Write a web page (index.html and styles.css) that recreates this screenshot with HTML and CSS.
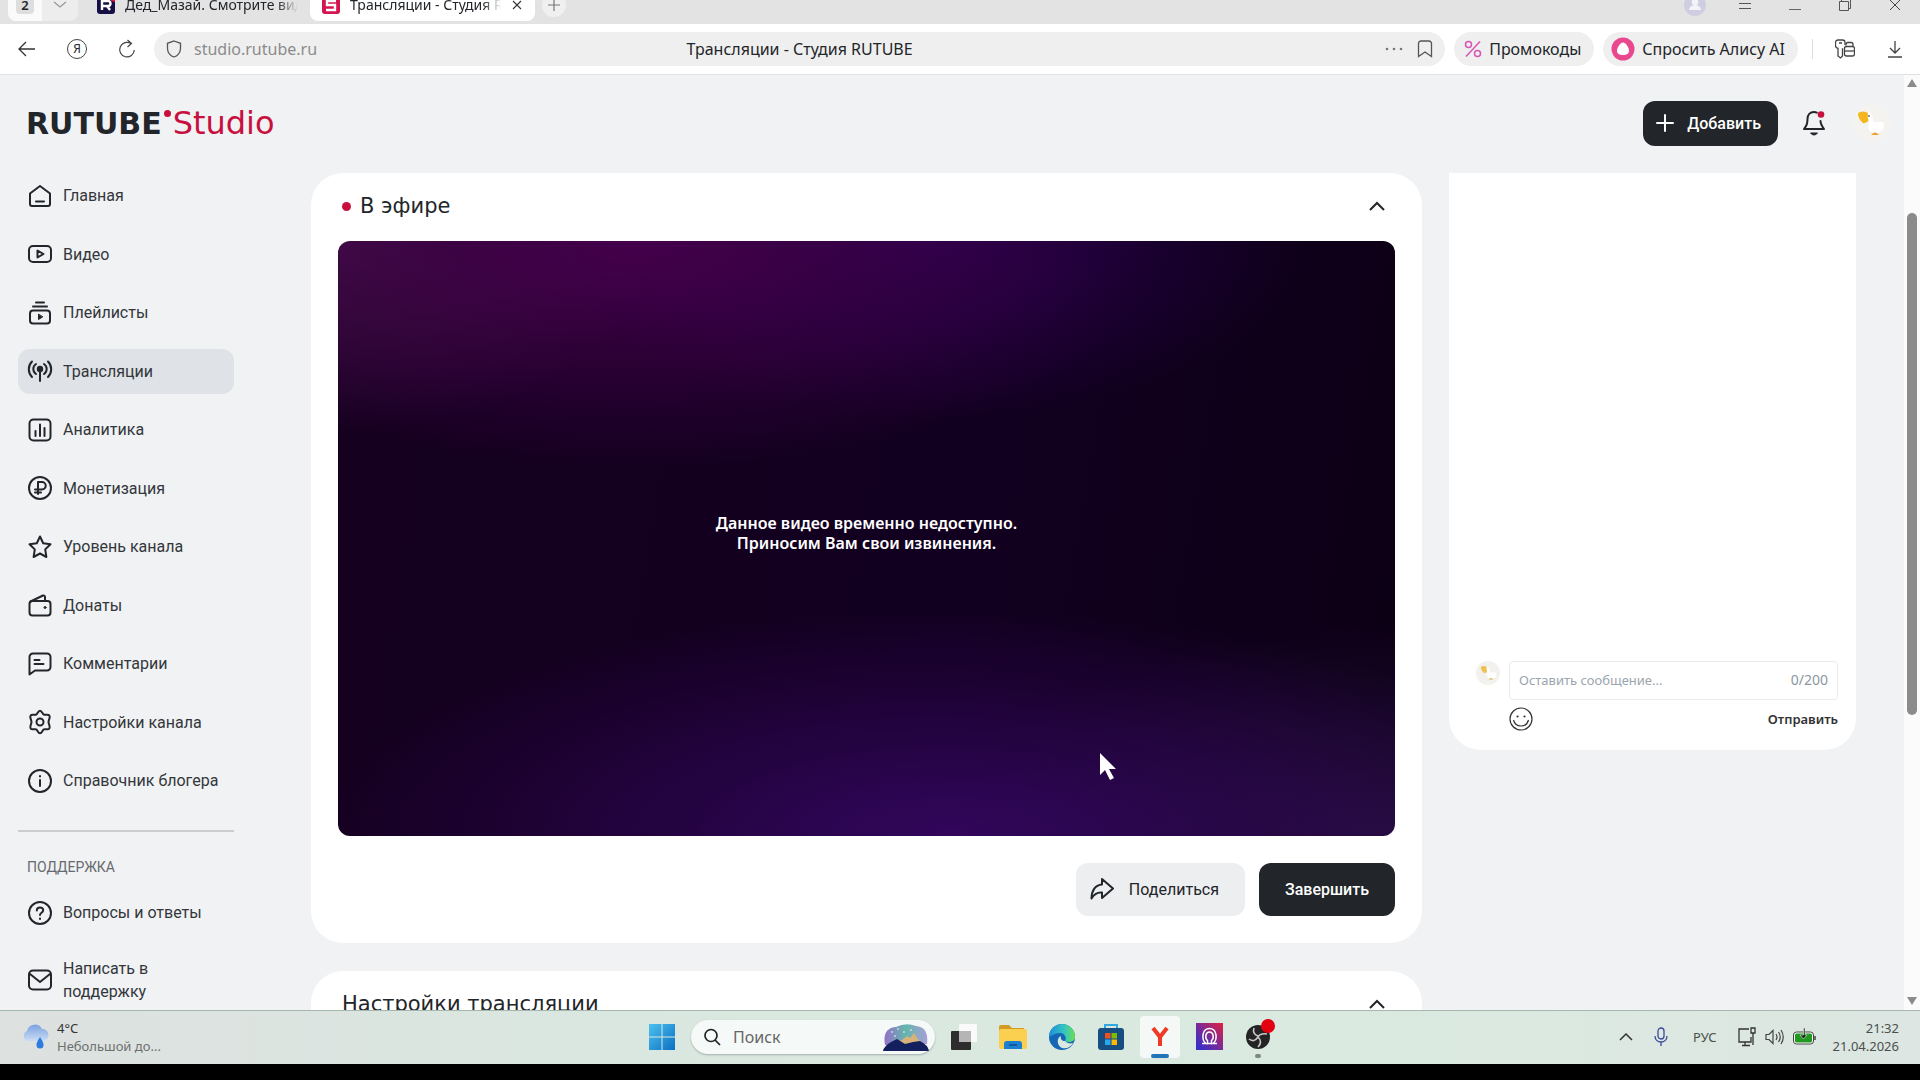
FILE: index.html
```html
<!DOCTYPE html>
<html lang="ru">
<head>
    <meta charset="UTF-8">
    <meta name="viewport" content="width=device-width, initial-scale=1.0">
    <title>Трансляции - Студия RUTUBE</title>
    <link rel="stylesheet" href="styles.css">
</head>
<body>
    <!-- Browser tabs -->
    <div class="tab-strip">
        <div class="tab-group">
            <button class="tab-count" type="button"><span>2</span></button>
            <button class="tab-list" type="button" aria-label="Список вкладок">
                <svg width="14" height="8" viewBox="0 0 14 8"><path d="M1 1l6 5 6-5" fill="none" stroke="#999" stroke-width="1.3"/></svg>
            </button>
        </div>
        <div class="tab">
            <svg width="18" height="18" viewBox="0 0 18 18"><rect width="18" height="18" rx="3" fill="#150f45"/><path d="M13 0h2a3 3 0 0 1 3 3v3a5 5 0 0 1-5-6z" fill="#e5173f"/><path d="M5 14V5h6a2 2 0 0 1 0 5H5m5 0l3 4" fill="none" stroke="#fff" stroke-width="2.4"/></svg>
            <span class="tab-title">Дед_Мазай. Смотрите видео</span>
        </div>
        <div class="tab active">
            <svg width="18" height="18" viewBox="0 0 18 18"><rect width="18" height="18" rx="3" fill="#d4154f"/><path d="M14 5H5v4h8v5H4" fill="none" stroke="#fff" stroke-width="2.4"/></svg>
            <span class="tab-title">Трансляции - Студия RUTUBE</span>
            <button class="tab-close" type="button" aria-label="Закрыть вкладку">
                <svg width="10" height="10" viewBox="0 0 10 10"><path d="M1 1l8 8M9 1L1 9" stroke="#333" stroke-width="1.1"/></svg>
            </button>
        </div>
        <button class="tab-new" type="button" aria-label="Новая вкладка">
            <svg width="14" height="14" viewBox="0 0 14 14"><path d="M7 1v12M1 7h12" stroke="#777" stroke-width="1.2"/></svg>
        </button>
        <div class="window-controls">
            <button type="button" aria-label="Профиль"><svg width="22" height="22" viewBox="0 0 22 22"><circle cx="11" cy="11" r="11" fill="#cfcde0"/><circle cx="11" cy="8" r="3.2" fill="#f4f3fa"/><path d="M5 16a6 5 0 0 1 12 0z" fill="#f4f3fa"/></svg></button>
            <button type="button" aria-label="Меню"><svg width="12" height="12" viewBox="0 0 12 12"><path d="M0 4.500h12M0 9.500h12" stroke="#555"/></svg></button>
            <button type="button" aria-label="Свернуть"><svg width="12" height="12" viewBox="0 0 12 12"><path d="M0 10.500h12" stroke="#666"/></svg></button>
            <button type="button" aria-label="Окно"><svg width="12" height="12" viewBox="0 0 12 12"><path d="M.5 2.500h9v9h-9zM2.500 2.500v-2h9v9h-2" fill="none" stroke="#555"/></svg></button>
            <button type="button" aria-label="Закрыть"><svg width="12" height="12" viewBox="0 0 12 12"><path d="M1 1l10 10M11 1L1 11" stroke="#444"/></svg></button>
        </div>
    </div>

    <!-- Address bar -->
    <div class="toolbar">
        <button class="tool-btn" type="button" aria-label="Назад"><svg width="18" height="18" viewBox="0 0 18 18"><path d="M8 2L1 9l7 7M1 9h16" fill="none" stroke="#333" stroke-width="1.3"/></svg></button>
        <button class="tool-btn" type="button" aria-label="Яндекс"><span class="ya-badge">Я</span></button>
        <button class="tool-btn" type="button" aria-label="Обновить"><svg width="18" height="20" viewBox="0 0 18 20"><path d="M13 4.500A7.300 7.300 0 1 0 16.300 11M9.500 1l4 3.500-4 3.500" fill="none" stroke="#444" stroke-width="1.200"/></svg></button>
        <div class="address">
            <div class="address-left">
                <svg width="16" height="18" viewBox="0 0 16 18"><path d="M8 1l6.500 2.300v5.200C14.500 13 11 16 8 17c-3-1-6.500-4-6.500-8.500V3.300z" fill="none" stroke="#555" stroke-width="1.3"/></svg>
                <span class="address-url">studio.rutube.ru</span>
            </div>
            <span class="address-title">Трансляции - Студия RUTUBE</span>
            <div class="address-right">
                <svg width="18" height="4" viewBox="0 0 18 4"><g fill="#777"><circle cx="2" cy="2" r="1.300"/><circle cx="9" cy="2" r="1.300"/><circle cx="16" cy="2" r="1.300"/></g></svg>
                <svg width="16" height="18" viewBox="0 0 16 18"><path d="M1.500 16.500V3.500a2.500 2.500 0 0 1 2.500-2.500h8a2.500 2.500 0 0 1 2.500 2.500v13L8 12z" fill="none" stroke="#555" stroke-width="1.3"/></svg>
            </div>
        </div>
        <button class="pill" type="button">
            <svg width="18" height="18" viewBox="0 0 18 18"><g fill="none" stroke="#d755b4" stroke-width="1.500"><circle cx="4.500" cy="4.500" r="3"/><circle cx="13.500" cy="13.500" r="3"/><path d="M16 1.500L2 16.500"/></g></svg>
            Промокоды
        </button>
        <button class="pill pill-alice" type="button">
            <svg width="24" height="24" viewBox="0 0 24 24"><circle cx="12" cy="12" r="11.500" fill="#e9488f"/><path d="M12 5.500c2.500 0 6 5 6 8.300S15.500 18 12 18s-6-.9-6-4.200 3.500-8.300 6-8.300z" fill="#fff"/></svg>
            Спросить Алису AI
        </button>
        <span class="tool-divider"></span>
        <button class="tool-btn" type="button" aria-label="Пароли"><svg width="20" height="20" viewBox="0 0 20 20"><g fill="none" stroke="#444" stroke-width="1.300"><path d="M10 6V3.500A2.500 2.500 0 0 0 7.500 1H3a2.500 2.500 0 0 0-2.500 2.500v3C.5 8 1.500 9 3 9.300V17l2.500 2 2-2V9.300"/><path d="M4 4h3M11 6.500V5.500a2 2 0 0 1 2-2h3a2 2 0 0 1 2 2v2"/><rect x="9.500" y="7.500" width="10" height="9.500" rx="2"/><path d="M9.500 12h10"/></g></svg></button>
        <button class="tool-btn" type="button" aria-label="Загрузки"><svg width="16" height="18" viewBox="0 0 16 18"><path d="M8 1v12M3 8l5 5 5-5M1 17h14" fill="none" stroke="#444" stroke-width="1.300"/></svg></button>
    </div>

    <div class="viewport">
        <div class="studio">
            <header class="studio-header">
                <a class="logo" href="#"><span class="logo-main">RUTUBE</span><span class="logo-dot"></span><span class="logo-sub">Studio</span></a>
                <div class="header-actions">
                    <button class="btn btn-dark btn-add" type="button">
                        <svg width="18" height="18" viewBox="0 0 18 18"><path d="M9 1v16M1 9h16" stroke="#fff" stroke-width="2" stroke-linecap="round"/></svg>
                        Добавить
                    </button>
                    <button class="bell" type="button" aria-label="Уведомления">
                        <svg width="24" height="26" viewBox="0 0 24 26"><path d="M12 2C8 2 5.500 5 5.500 9c0 5-1 6.500-3.500 10h20c-2.500-3.500-3.500-5-3.500-8M12 2c1 0 2 .2 2.800.6" fill="none" stroke="#222529" stroke-width="2" stroke-linejoin="round" stroke-linecap="round"/><path d="M8.500 23c2 2.600 5 2.600 7 0z" fill="#222529" stroke="#222529" stroke-linejoin="round"/><circle cx="19" cy="4.500" r="3.300" fill="#c8103e"/></svg>
                    </button>
                    <svg class="avatar" width="40" height="40" viewBox="0 0 40 40"><circle cx="20" cy="20" r="19" fill="#f4f3ef"/><path d="M6 10q5-3 10 0l1 7q-3 4-6 3-5-4-5-10z" fill="#f3b61f"/><path d="M16 9q5 1 5 10h10q2 3 0 8-7 5-13 1-3-4-1-9-2-5-1-10z" fill="#fff"/><circle cx="17" cy="13" r="1" fill="#777"/><path d="M19 32q4-5 8 0z" fill="#f0a02c"/></svg>
                </div>
            </header>

            <div class="columns">
                <nav class="sidebar">
                    <ul class="menu">
                        <li><a class="menu-item" href="#"><svg class="icon" viewBox="0 0 24 24"><path d="M2 9.500L12 2l10 7.500V20a2 2 0 0 1-2 2H4a2 2 0 0 1-2-2zM8 17.500h8"/></svg>Главная</a></li>
                        <li><a class="menu-item" href="#"><svg class="icon" viewBox="0 0 24 24"><rect x="1" y="4" width="22" height="16" rx="4"/><path d="M9.500 8.500v7l6-3.500z"/></svg>Видео</a></li>
                        <li><a class="menu-item" href="#"><svg class="icon" viewBox="0 0 24 24"><rect x="2" y="9.500" width="20" height="13" rx="3"/><path d="M8 1.500h8M5 5.500h14"/><path d="M10.500 13.500v5l4-2.500z" fill="#222529" stroke-width="1"/></svg>Плейлисты</a></li>
                        <li><a class="menu-item active" href="#"><svg class="icon" viewBox="0 0 24 24"><circle cx="12" cy="10" r="2.200" fill="#222529"/><path d="M12 11v11M8 15a6 6 0 0 1 0-10M16 15a6 6 0 0 0 0-10M4 18A11 11 0 0 1 4 2.500M20 18a11 11 0 0 0 0-15.500"/></svg>Трансляции</a></li>
                        <li><a class="menu-item" href="#"><svg class="icon" viewBox="0 0 24 24"><rect x="1.500" y="1.500" width="21" height="21" rx="4"/><path d="M7.500 13v5M12 6.500V18M16.500 10v8"/></svg>Аналитика</a></li>
                        <li><a class="menu-item" href="#"><svg class="icon" viewBox="0 0 24 24"><circle cx="12" cy="12" r="11"/><path d="M10 18V6h4a3.500 3.500 0 0 1 0 7.500H7M7 16.500h6"/></svg>Монетизация</a></li>
                        <li><a class="menu-item" href="#"><svg class="icon" viewBox="0 0 24 24"><path d="M12 1.500l3.200 6.700 7.300 1-5.300 5.200 1.200 7.600-6.400-3.500L5.600 22l1.200-7.600L1.500 9.200l7.300-1z"/></svg>Уровень канала</a></li>
                        <li><a class="menu-item" href="#"><svg class="icon" viewBox="0 0 24 24"><rect x="1.500" y="8" width="21" height="14.500" rx="3"/><path d="M2.500 8.500L15 2.500a1.500 1.500 0 0 1 2 1.500v4"/><circle cx="17" cy="14.500" r="1" fill="#222529" stroke-width="1"/></svg>Донаты</a></li>
                        <li><a class="menu-item" href="#"><svg class="icon" viewBox="0 0 24 24"><path d="M1.500 22.500V5a3.500 3.500 0 0 1 3.500-3.500h14A3.500 3.500 0 0 1 22.500 5v10a3.500 3.500 0 0 1-3.500 3.500H7zM6.500 8h5M6.500 12h9"/></svg>Комментарии</a></li>
                        <li><a class="menu-item" href="#"><svg class="icon" viewBox="0 0 24 24"><path d="M12 .8c2 0 2.300 3 3.800 3.800 1.600.8 4.300-.8 5.500.8 1.500 2-.8 4.400-.8 6.600s2.300 4.600.8 6.600c-1.200 1.600-3.900 0-5.500.8-1.500.8-1.800 3.800-3.800 3.800s-2.300-3-3.800-3.800c-1.600-.8-4.300.8-5.500-.8-1.500-2 .8-4.400.8-6.600S1.200 7.400 2.700 5.400c1.200-1.600 3.900 0 5.500-.8C9.700 3.800 10 .8 12 .8z"/><circle cx="12" cy="12" r="3.500"/></svg>Настройки канала</a></li>
                        <li><a class="menu-item" href="#"><svg class="icon" viewBox="0 0 24 24"><circle cx="12" cy="12" r="11"/><path d="M12 11v6M12 7v.4"/></svg>Справочник блогера</a></li>
                    </ul>
                    <div class="menu-title">Поддержка</div>
                    <ul class="menu-support">
                        <li><a class="menu-item" href="#"><svg class="icon" viewBox="0 0 24 24"><circle cx="12" cy="12" r="11"/><path d="M8.800 9.500c0-4 6.400-4 6.400-.3 0 2.400-3.200 2.600-3.200 4.800M12 17.500v.4"/></svg>Вопросы и ответы</a></li>
                        <li><a class="menu-item" href="#"><svg class="icon" viewBox="0 0 24 24"><rect x="1" y="2.500" width="22" height="19" rx="4"/><path d="M2 6l10 8L22 6"/></svg><span>Написать в поддержку</span></a></li>
                    </ul>
                </nav>

                <main class="content">
                    <section class="card">
                        <div class="card-head">
                            <h2 class="card-title"><span class="live-dot"></span>В эфире</h2>
                            <button class="collapse" type="button" aria-label="Свернуть"><svg width="18" height="12" viewBox="0 0 18 12"><path d="M2 10l7-7 7 7" fill="none" stroke="#222529" stroke-width="2"/></svg></button>
                        </div>
                        <div class="player">
                            <p>Данное видео временно недоступно.<br>Приносим Вам свои извинения.</p>
                            <svg class="cursor" width="18" height="30" viewBox="0 0 18 30"><path d="M1 1v22l5-5 5 10 4-2-5-9h7z" fill="#fff"/></svg>
                        </div>
                        <div class="card-actions">
                            <button class="btn btn-light" type="button">
                                <svg width="24" height="24" viewBox="0 0 24 24"><path d="M12 2l11 9.500L12 21v-5.500c-5-.5-8 1.500-10.500 6C1.500 14 5 8 12 7.500z" fill="none" stroke="#222529" stroke-width="2" stroke-linejoin="round"/></svg>
                                Поделиться
                            </button>
                            <button class="btn btn-dark btn-finish" type="button">Завершить</button>
                        </div>
                    </section>
                    <section class="card">
                        <div class="card-head">
                            <h2 class="card-title">Настройки трансляции</h2>
                            <button class="collapse" type="button" aria-label="Свернуть"><svg width="18" height="12" viewBox="0 0 18 12"><path d="M2 10l7-7 7 7" fill="none" stroke="#222529" stroke-width="2"/></svg></button>
                        </div>
                    </section>
                </main>

                <aside class="chat">
                    <svg class="chat-avatar" width="24" height="24" viewBox="0 0 40 40"><circle cx="20" cy="20" r="20" fill="#f2f1ed"/><path d="M8 10q5-3 10 0l1 7q-3 4-6 3-5-4-5-10z" fill="#efc050"/><path d="M18 9q5 1 5 10h10q2 3 0 8-7 5-13 1-3-4-1-9-2-5-1-10z" fill="#fff"/><path d="M21 31q4-5 8 0z" fill="#d6b84a"/></svg>
                    <form class="chat-form">
                        <div class="chat-field">
                            <input type="text" maxlength="200" placeholder="Оставить сообщение..." aria-label="Сообщение">
                            <span class="chat-count">0/200</span>
                        </div>
                        <div class="chat-actions">
                            <button type="button" aria-label="Смайлы"><svg width="24" height="24" viewBox="0 0 24 24"><g fill="none" stroke="#333" stroke-width="1.200"><circle cx="12" cy="12" r="11"/><path d="M4.500 13c2 8 13 8 15 0"/></g><g fill="#333"><circle cx="8.500" cy="9.500" r="1.100"/><circle cx="15.500" cy="9.500" r="1.100"/></g></svg></button>
                            <button class="chat-send" type="button">Отправить</button>
                        </div>
                    </form>
                </aside>
            </div>
        </div>
        <div class="scrollbar">
            <svg width="12" height="8" viewBox="0 0 12 8"><path d="M6 0l5 8H1z" fill="#8b8b8b"/></svg>
            <div class="scroll-track"><div class="scroll-thumb"></div></div>
            <svg width="12" height="8" viewBox="0 0 12 8"><path d="M6 8l5-8H1z" fill="#8b8b8b"/></svg>
        </div>
    </div>

    <!-- Windows taskbar -->
    <div class="taskbar">
        <div class="weather">
            <svg width="28" height="28" viewBox="0 0 28 28"><defs><linearGradient id="cloud" x1="0" y1="0" x2="0" y2="1"><stop offset="0" stop-color="#7ba2e0"/><stop offset="1" stop-color="#cbdcf5"/></linearGradient></defs><path d="M6 18a5.500 5.500 0 0 1 0-10 8 8 0 0 1 15-2 6 6 0 0 1 1 12z" fill="url(#cloud)"/><path d="M19 14q4 6 3.500 8a3.500 3.500 0 0 1-7 0q-.5-2 3.500-8z" fill="#2f7be0"/></svg>
            <div>
                <div>4°C</div>
                <div class="weather-text">Небольшой до...</div>
            </div>
        </div>
        <div class="apps">
            <button class="app" type="button" aria-label="Пуск"><svg width="26" height="26" viewBox="0 0 26 26"><defs><linearGradient id="win" x1="0" y1="0" x2="1" y2="1"><stop offset="0" stop-color="#4cc2ee"/><stop offset="1" stop-color="#0b6fc4"/></linearGradient></defs><path d="M0 0h12.500v12.500H0zM13.500 0H26v12.500H13.500zM0 13.500h12.500V26H0zM13.500 13.500H26V26H13.500z" fill="url(#win)"/></svg></button>
            <label class="search">
                <svg width="18" height="18" viewBox="0 0 18 18"><g fill="none" stroke="#222" stroke-width="1.700"><circle cx="8" cy="7.500" r="6"/><path d="M12 12l5 5"/></g></svg>
                <input type="text" placeholder="Поиск" aria-label="Поиск">
                <svg width="46" height="28" viewBox="0 0 46 28"><defs><linearGradient id="sky"><stop offset="0" stop-color="#9471c9"/><stop offset=".5" stop-color="#63b7ad"/><stop offset="1" stop-color="#a79fd8"/></linearGradient></defs><path d="M2 22Q-1 5 13 4q10-5 20-1 13 1 11 18z" fill="url(#sky)"/><path d="M10 20l9-3 5-4 3 2 4-5 4 6 7 6z" fill="#d9b27b"/><path d="M0 28q1-5 8-9l6-3 8 5 8-2 7-1q8 4 9 10z" fill="#14205e"/><g fill="#fff"><circle cx="9" cy="9" r=".8"/><circle cx="15" cy="6" r=".8"/><circle cx="12" cy="13" r=".8"/><circle cx="21" cy="9" r=".8"/><circle cx="28" cy="7" r=".8"/></g></svg>
            </label>
            <button class="app" type="button" aria-label="Представление задач"><svg width="26" height="26" viewBox="0 0 26 26"><rect x="8" y="0" width="18" height="18" rx="1" fill="#fafafa"/><rect x="0" y="7" width="20" height="19" rx="1" fill="#2d2d2d"/><rect x="8" y="7" width="12" height="11" fill="#b5b5b5"/></svg></button>
            <button class="app" type="button" aria-label="Проводник"><svg width="28" height="26" viewBox="0 0 28 26"><path d="M0 3a2 2 0 0 1 2-2h8l3 3h12v8H0z" fill="#d39b22"/><rect y="5" width="28" height="20" rx="2" fill="#fbcf50"/><path d="M5 25v-5a3 3 0 0 1 3-3h12a3 3 0 0 1 3 3v5z" fill="#1c7fd0"/><path d="M10 21h8" stroke="#0c4e8c" stroke-width="1.500"/></svg></button>
            <button class="app" type="button" aria-label="Edge"><svg width="28" height="28" viewBox="0 0 28 28"><defs><linearGradient id="edge"><stop offset="0" stop-color="#1c8fd8"/><stop offset=".6" stop-color="#35c6c0"/><stop offset="1" stop-color="#6be04f"/></linearGradient></defs><circle cx="14" cy="14" r="13" fill="#1467b5"/><path d="M1 14a13 13 0 0 1 26 0c0 5-6 6-10 4 2-3 0-8-5-8-5 0-9 3-11 4z" fill="url(#edge)"/><path d="M17 18c-3 0-5-2-4-5-4 1-5 9 1 12 5 1 9-1 11-5-3 1-6 0-8-2z" fill="#dbe8e1"/></svg></button>
            <button class="app" type="button" aria-label="Microsoft Store"><svg width="26" height="26" viewBox="0 0 26 26"><path d="M7 5V1h12v4" fill="none" stroke="#35a6e0" stroke-width="2"/><rect y="4" width="26" height="22" rx="3" fill="#174e82"/><path d="M7 9h5.500v5.500H7z" fill="#f25022"/><path d="M13.500 9H19v5.500h-5.500z" fill="#7fba00"/><path d="M7 15.500h5.500V21H7z" fill="#25a9ee"/><path d="M13.500 15.500H19V21h-5.500z" fill="#ffb900"/></svg></button>
            <button class="app current" type="button" aria-label="Яндекс Браузер"><svg width="18" height="20" viewBox="0 0 18 20"><path d="M2 1l7 9v9M16 1l-7 9" fill="none" stroke="#ef3a25" stroke-width="4"/></svg></button>
            <button class="app" type="button" aria-label="Приложение"><svg width="27" height="27" viewBox="0 0 27 27"><defs><linearGradient id="pip" x1="0" y1="1" x2="1" y2="0"><stop offset="0" stop-color="#2a2fd2"/><stop offset=".5" stop-color="#7a2a98"/><stop offset="1" stop-color="#e5203c"/></linearGradient></defs><rect width="27" height="27" fill="url(#pip)"/><g fill="none" stroke="#fff" stroke-width="1.500"><path d="M6 20.500h4c-5-4-4-15 3.500-15s8.500 11 3.500 15h4"/><path d="M11.500 20.500v-3c-3-2-2-8.500 2-8.500s5 6.500 2 8.500v3z"/></g></svg></button>
            <button class="app running" type="button" aria-label="OBS"><svg width="24" height="24" viewBox="0 0 24 24"><circle cx="12" cy="12" r="12" fill="#242424"/><g fill="none" stroke="#c9c9c9" stroke-width="1.600"><path d="M8 3q-2 6 4 8M21 9q-7-1-9 3M12 22q5-5 0-10M3 14q5 4 9-2"/></g></svg></button>
        </div>
        <div class="tray">
            <svg width="14" height="8" viewBox="0 0 14 8"><path d="M1 7l6-6 6 6" fill="none" stroke="#333" stroke-width="1.500"/></svg>
            <svg class="tray-mic" width="14" height="20" viewBox="0 0 14 20"><g fill="none" stroke="#3c4a9c" stroke-width="1.300"><rect x="4" y="1" width="6" height="11" rx="3"/><path d="M1 9c0 8 12 8 12 0M7 15v4"/></g></svg>
            <span class="tray-lang">РУС</span>
            <svg width="18" height="20" viewBox="0 0 18 20"><path d="M11 2H1v13h12v-5M7 15v3M4 18.500h8M13 1h4v5h-4zM15 6v12" fill="none" stroke="#333" stroke-width="1.300"/></svg>
            <svg width="19" height="18" viewBox="0 0 19 18"><path d="M1 6.500h3l4-4v13l-4-4H1zM11 6q2 3 0 6M13.500 4q3.500 5 0 10M16 2q4.500 7 0 14" fill="none" stroke="#444" stroke-width="1.200"/></svg>
            <svg width="23" height="18" viewBox="0 0 23 18"><rect x=".5" y="4" width="20" height="12" rx="3" fill="#fff" stroke="#444"/><rect x="2" y="5.500" width="17" height="9" rx="1.500" fill="#1f9a1f"/><path d="M22 8v4" stroke="#444" stroke-width="1.500"/><path d="M10.500 0v7H7l3.500 4L14 7h-2V0z" fill="#222" stroke="#dfeae2" stroke-width=".6"/></svg>
            <div class="clock"><div>21:32</div><div>21.04.2026</div></div>
        </div>
    </div>
</body>
</html>
```
FILE: styles.css
```css
:root {
    --dark: #222529;
    --page-bg: #f1f2f4;
    --red: #c8103e;
    --chip: #efefef;
}

* {
    box-sizing: border-box;
}

body {
    margin: 0;
    height: 100vh;
    padding-bottom: 16px;
    display: flex;
    flex-direction: column;
    overflow: hidden;
    background: #000;
    color: var(--dark);
    font-family: Roboto, "Liberation Sans", sans-serif;
    font-size: 16px;
}

button {
    border: none;
    padding: 0;
    background: none;
    font: inherit;
    color: inherit;
    cursor: pointer;
    display: flex;
    align-items: center;
    justify-content: center;
}

a {
    color: inherit;
    text-decoration: none;
}

ul {
    list-style: none;
    margin: 0;
    padding: 0;
}

svg {
    flex: none;
}

/* Tabs */
.tab-strip {
    height: 24px;
    flex: none;
    display: flex;
    align-items: flex-end;
    padding: 0 0 3px 8px;
    overflow: hidden;
    background: #e3e3e3;
    font-family: "Noto Sans", "Open Sans", sans-serif;
    font-size: 14px;
}

.tab-group {
    display: flex;
    height: 32px;
    border-radius: 8px;
    overflow: hidden;
    background: #ededed;
}

.tab-count {
    width: 34px;
    background: #fafafa;
    font-size: 13px;
    font-weight: 600;
}

.tab-count span {
    width: 18px;
    line-height: 18px;
    border-radius: 4px;
    background: #dedede;
}

.tab-list {
    width: 36px;
}

.tab {
    display: flex;
    align-items: center;
    gap: 10px;
    width: 225px;
    height: 32px;
    padding: 0 12px;
    border-radius: 8px;
}

.tab-group + .tab {
    margin-left: 7px;
}

.tab.active {
    background: #fff;
    margin-right: 7px;
}

.tab-title {
    flex: 1;
    min-width: 0;
    overflow: hidden;
    white-space: nowrap;
    line-height: 22px;
    mask-image: linear-gradient(to right, #000 88%, transparent);
}

.tab-close {
    width: 12px;
}

.tab-new {
    width: 24px;
    height: 24px;
    margin-bottom: 4px;
    border-radius: 50%;
    background: #f0f0f0;
}

.window-controls {
    display: flex;
    margin-left: auto;
}

.window-controls button {
    width: 50px;
    height: 32px;
}

/* Toolbar */
.toolbar {
    height: 51px;
    flex: none;
    display: flex;
    align-items: center;
    padding-left: 2px;
    background: #fff;
    border-bottom: 1px solid #e2e2e2;
    font-family: "Noto Sans", "Open Sans", sans-serif;
    font-size: 16px;
}

.tool-btn {
    width: 50px;
    height: 34px;
}

.ya-badge {
    width: 20px;
    height: 20px;
    border: 1px solid #444;
    border-radius: 50%;
    font-size: 12px;
    line-height: 18px;
}

.address {
    flex: 1;
    height: 34px;
    display: grid;
    grid-template-columns: 1fr auto 1fr;
    align-items: center;
    padding: 0 12px;
    margin-left: 2px;
    border-radius: 17px;
    background: var(--chip);
}

.address-left,
.address-right {
    display: flex;
    align-items: center;
    gap: 12px;
}

.address-right {
    justify-content: flex-end;
    gap: 14px;
}

.address-url {
    color: #8b8b8b;
}

.pill {
    height: 34px;
    margin-left: 9px;
    padding: 0 13px 0 10px;
    gap: 7px;
    border-radius: 17px;
    background: var(--chip);
}

.pill-alice {
    padding-left: 8px;
}

.tool-divider {
    width: 1px;
    height: 20px;
    margin: 0 7px 0 14px;
    background: #ddd;
}

/* Page */
.viewport {
    flex: 1;
    min-height: 0;
    display: flex;
    background: var(--page-bg);
}

.studio {
    flex: 1;
    min-width: 0;
    overflow: hidden;
}

.studio-header {
    height: 98px;
    display: flex;
    align-items: center;
    justify-content: space-between;
    padding: 0 12px 2px 26px;
}

.logo {
    display: flex;
    align-items: baseline;
    font-family: "DejaVu Sans", sans-serif;
    line-height: 36px;
}

.logo-main {
    font-size: 30px;
    font-weight: bold;
}

.logo-dot {
    width: 7px;
    height: 7px;
    margin: 5px 2px 0;
    align-self: flex-start;
    border-radius: 50%;
    background: var(--red);
}

.logo-sub {
    font-size: 32px;
    color: var(--red);
}

.header-actions {
    display: flex;
    align-items: center;
}

.btn {
    height: 53px;
    border-radius: 12px;
}

.btn-dark {
    background: var(--dark);
    color: #fff;
    font-weight: 500;
}

.btn-light {
    padding: 0 26px 0 14px;
    gap: 15px;
    background: #eceef0;
}

.btn-add {
    height: 45px;
    padding: 0 17px 0 13px;
    gap: 13px;
}

.btn-finish {
    padding: 0 26px;
}

.bell {
    margin: 0 26px 0 24px;
}

.columns {
    display: flex;
    align-items: flex-start;
    gap: 27px;
    padding-right: 48px;
}

/* Sidebar */
.sidebar {
    width: 284px;
    flex: none;
    padding: 0 50px 0 18px;
}

.menu {
    height: 630px;
    display: flex;
    flex-direction: column;
    justify-content: space-between;
}

.menu-item {
    min-height: 45px;
    display: flex;
    align-items: center;
    gap: 11px;
    padding: 0 10px;
    border-radius: 12px;
    line-height: 23px;
    color: #33373b;
}

.menu-item.active {
    background: #dfe2e6;
}

.icon {
    width: 24px;
    height: 24px;
    overflow: visible;
    fill: none;
    stroke: var(--dark);
    stroke-width: 2;
    stroke-linecap: round;
    stroke-linejoin: round;
}

.menu-title {
    margin-top: 27px;
    padding: 24px 0 12px 9px;
    border-top: 2px solid #cbced1;
    font-size: 14px;
    line-height: 22px;
    text-transform: uppercase;
    color: #666a6e;
}

.menu-support {
    display: grid;
    gap: 22px;
}

.menu-support span {
    width: 110px;
}

/* Main column */
.content {
    flex: 1;
    min-width: 0;
}

.card {
    padding: 0 27px 27px;
    margin-bottom: 28px;
    border-radius: 32px;
    background: #fff;
}

.card-head {
    height: 68px;
    display: flex;
    align-items: center;
    justify-content: space-between;
    padding: 0 9px 2px 4px;
}

.card-title {
    display: flex;
    align-items: center;
    gap: 9px;
    margin: 0;
    font-family: "DejaVu Sans", sans-serif;
    font-size: 21px;
    font-weight: normal;
}

.live-dot {
    width: 9px;
    height: 9px;
    border-radius: 50%;
    background: var(--red);
}

.player {
    position: relative;
    aspect-ratio: 16 / 9;
    display: flex;
    align-items: center;
    justify-content: center;
    padding-bottom: 10px;
    border-radius: 12px;
    background:
        radial-gradient(ellipse 50% 38% at 28% 0, #45004c, transparent),
        radial-gradient(ellipse 36% 30% at 56% 0, #240048, transparent),
        radial-gradient(ellipse 30% 32% at 0 0, #3a1040, transparent),
        radial-gradient(ellipse 60% 38% at 58% 100%, #32065c, transparent),
        radial-gradient(ellipse 40% 36% at 100% 100%, #220e38, transparent),
        linear-gradient(100deg, #15001f, #120020 60%, #0c0014);
}

.player p {
    margin: 0;
    font-family: "Noto Sans", sans-serif;
    font-weight: 600;
    line-height: 20px;
    text-align: center;
    color: #fff;
}

.cursor {
    position: absolute;
    left: 72%;
    top: 86%;
}

.card-actions {
    display: flex;
    justify-content: flex-end;
    gap: 14px;
    margin-top: 27px;
}

/* Chat */
.chat {
    width: 407px;
    flex: none;
    display: flex;
    align-items: flex-start;
    gap: 9px;
    padding: 488px 18px 15px 27px;
    border-radius: 0 0 32px 32px;
    background: #fff;
    font-family: "Noto Sans", sans-serif;
}

.chat-form {
    flex: 1;
    min-width: 0;
}

.chat-field {
    display: flex;
    align-items: center;
    height: 39px;
    padding: 0 9px 2px;
    border: 1px solid #e9ebed;
    border-radius: 4px;
    font-size: 14px;
    color: #8d979f;
}

.chat-field input {
    flex: 1;
    min-width: 0;
    padding: 0;
    border: none;
    outline: none;
    font: inherit;
    font-size: 13px;
}

.chat-field input::placeholder {
    color: #9ba5ad;
}

.chat-actions {
    display: flex;
    justify-content: space-between;
    align-items: center;
    height: 33px;
    margin-top: 2px;
}

.chat-send {
    font-size: 13px;
    font-weight: 600;
    color: #333;
}

/* Scrollbar */
.scrollbar {
    width: 16px;
    flex: none;
    display: flex;
    flex-direction: column;
    align-items: center;
    padding: 4px 0 5px;
    background: #fbfbfb;
}

.scroll-track {
    flex: 1;
    padding-top: 126px;
}

.scroll-thumb {
    width: 10px;
    height: 64%;
    border-radius: 5px;
    background: #8b8b8b;
}

/* Taskbar */
.taskbar {
    height: 54px;
    flex: none;
    display: grid;
    grid-template-columns: 1fr auto 1fr;
    align-items: center;
    padding: 0 21px 2px;
    border-top: 1px solid #a5b8ae;
    background: linear-gradient(90deg, #dde1e0, #dae7e0 30%, #daeae0 70%, #dde6e2);
    font-family: "Noto Sans", sans-serif;
    font-size: 13px;
    line-height: 18px;
}

.weather {
    display: flex;
    align-items: center;
    gap: 8px;
    color: #333;
}

.weather-text {
    color: #6c706e;
}

.apps {
    display: flex;
    align-items: center;
    gap: 9px;
}

.app {
    position: relative;
    width: 40px;
    height: 42px;
}

.app.current {
    border-radius: 4px;
    background: #f4f8f6;
}

.app.current::after,
.app.running::after {
    content: "";
    position: absolute;
    bottom: 0;
    left: 50%;
    width: 18px;
    height: 4px;
    border-radius: 2px;
    background: #2275b8;
    transform: translateX(-50%);
}

.app.running::after {
    width: 6px;
    background: #7d8783;
}

.app.running::before {
    content: "";
    position: absolute;
    top: 3px;
    right: 3px;
    width: 14px;
    height: 14px;
    border-radius: 50%;
    background: #e3000f;
}

.search {
    width: 244px;
    height: 34px;
    display: flex;
    align-items: center;
    gap: 12px;
    padding: 0 6px 0 12px;
    border-radius: 17px;
    background: #f5f9f7;
    box-shadow: 0 1px 2px rgba(0, 0, 0, 0.25);
}

.search input {
    flex: 1;
    min-width: 0;
    padding: 0;
    border: none;
    outline: none;
    background: none;
    font: inherit;
    font-size: 16px;
}

.search input::placeholder {
    color: #666;
}

.tray {
    display: flex;
    align-items: center;
    justify-content: flex-end;
    gap: 9px;
    color: #4a4f4d;
}

.tray-mic {
    margin-left: 12px;
}

.tray-lang {
    margin: 0 12px 0 16px;
}

.clock {
    margin-left: 8px;
    text-align: right;
}
```
